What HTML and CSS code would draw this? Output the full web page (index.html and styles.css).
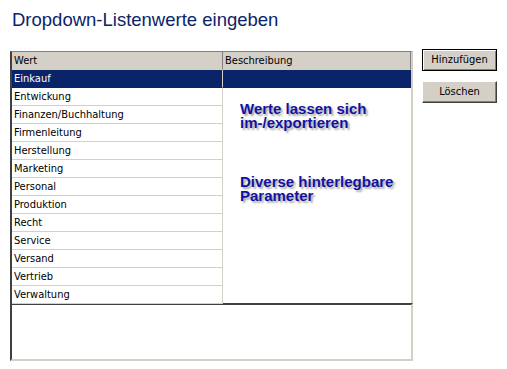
FILE: index.html
```html
<html>
	<head>
		<link rel="stylesheet" href="styles.css">
	</head>
	<body>
		<div class="title">Dropdown-Listenwerte eingeben</div>
		<div class="main">
			<div class="editor">
				<div class="grid">
					<div class="head">Wert</div>
					<div class="head">Beschreibung</div>
					<div class="cell selected">Einkauf</div><div class="desc selected"></div>
					<div class="cell">Entwickung</div><div class="desc"></div>
					<div class="cell">Finanzen/Buchhaltung</div><div class="desc"></div>
					<div class="cell">Firmenleitung</div><div class="desc"></div>
					<div class="cell">Herstellung</div><div class="desc"></div>
					<div class="cell">Marketing</div><div class="desc"></div>
					<div class="cell">Personal</div><div class="desc"></div>
					<div class="cell">Produktion</div><div class="desc"></div>
					<div class="cell">Recht</div><div class="desc"></div>
					<div class="cell">Service</div><div class="desc"></div>
					<div class="cell">Versand</div><div class="desc"></div>
					<div class="cell">Vertrieb</div><div class="desc"></div>
					<div class="cell">Verwaltung</div><div class="desc"></div>
					<div class="note note-1">Werte lassen sich<br />im-/exportieren</div>
					<div class="note note-2">Diverse hinterlegbare<br />Parameter</div>
				</div>
				<div class="memo"></div>
			</div>
			<div class="buttons">
				<div class="button default">Hinzufügen</div>
				<div class="button">Löschen</div>
			</div>
		</div>
	</body>
</html>
```

FILE: styles.css
```css
body {
	margin: 0;
	background-color: white;
	font-family: "DejaVu Sans", sans-serif;
	font-stretch: condensed;
	font-size: 11px;
	color: black;
}

.title {
	font-family: "Liberation Sans", sans-serif;
	font-stretch: normal;
	font-size: 18.5px;
	color: #0a246a;
	padding: 10px 0 0 12px;
	height: 28px;
	line-height: 20px;
}

.main {
	display: flex;
	gap: 9px;
	padding: 13px 0 0 10px;
}

.editor {
	width: 403px;
}

.grid {
	position: relative;
	display: grid;
	grid-template-columns: 211px 1fr;
	grid-auto-rows: 18px;
	border-left: 2px solid #404040;
	border-top: 1px solid #808080;
	border-right: 2px solid #d4d0c8;
	box-sizing: border-box;
	height: 252px;
}

.head {
	background-color: #d4d0c8;
	border-right: 1px solid #808080;
	border-bottom: 1px solid #d4d0c8;
	padding: 2px 0 0 2px;
	box-sizing: border-box;
}

.cell {
	border-right: 1px solid #d4d0c8;
	border-bottom: 1px solid #d4d0c8;
	padding: 2px 0 0 2px;
	box-sizing: border-box;
}

.desc {
	border-bottom: 1px solid transparent;
}

.selected {
	background-color: #0a246a;
	color: white;
	border-bottom-color: #0a246a;
}

.cell.selected {
	border-right-color: #d4d0c8;
}

.note {
	position: absolute;
	left: 228px;
	font-family: "Liberation Sans", sans-serif;
	font-stretch: normal;
	font-weight: bold;
	font-size: 15px;
	line-height: 14px;
	color: #1212a0;
	text-shadow: 2px 2px 2px rgba(0, 0, 0, 0.35);
}

.note-1 {
	top: 50px;
}

.note-2 {
	top: 123px;
}

.memo {
	height: 58px;
	border-top: 2px solid #404040;
	border-left: 2px solid #404040;
	border-right: 2px solid #d4d0c8;
	border-bottom: 2px solid #d4d0c8;
	box-sizing: border-box;
}

.buttons {
	display: flex;
	flex-direction: column;
	gap: 10px;
	margin-top: -2px;
}

.button {
	width: 75px;
	height: 22px;
	line-height: 20px;
	text-align: center;
	background-color: #d4d0c8;
	border-top: 1px solid #ffffff;
	border-left: 1px solid #ffffff;
	border-right: 1px solid #404040;
	border-bottom: 1px solid #404040;
	box-sizing: border-box;
	box-shadow: inset -1px -1px 0 #808080;
}

.button.default {
	border: 1px solid black;
	box-shadow: inset 1px 1px 0 #ffffff, inset -1px -1px 0 #808080;
}
```
